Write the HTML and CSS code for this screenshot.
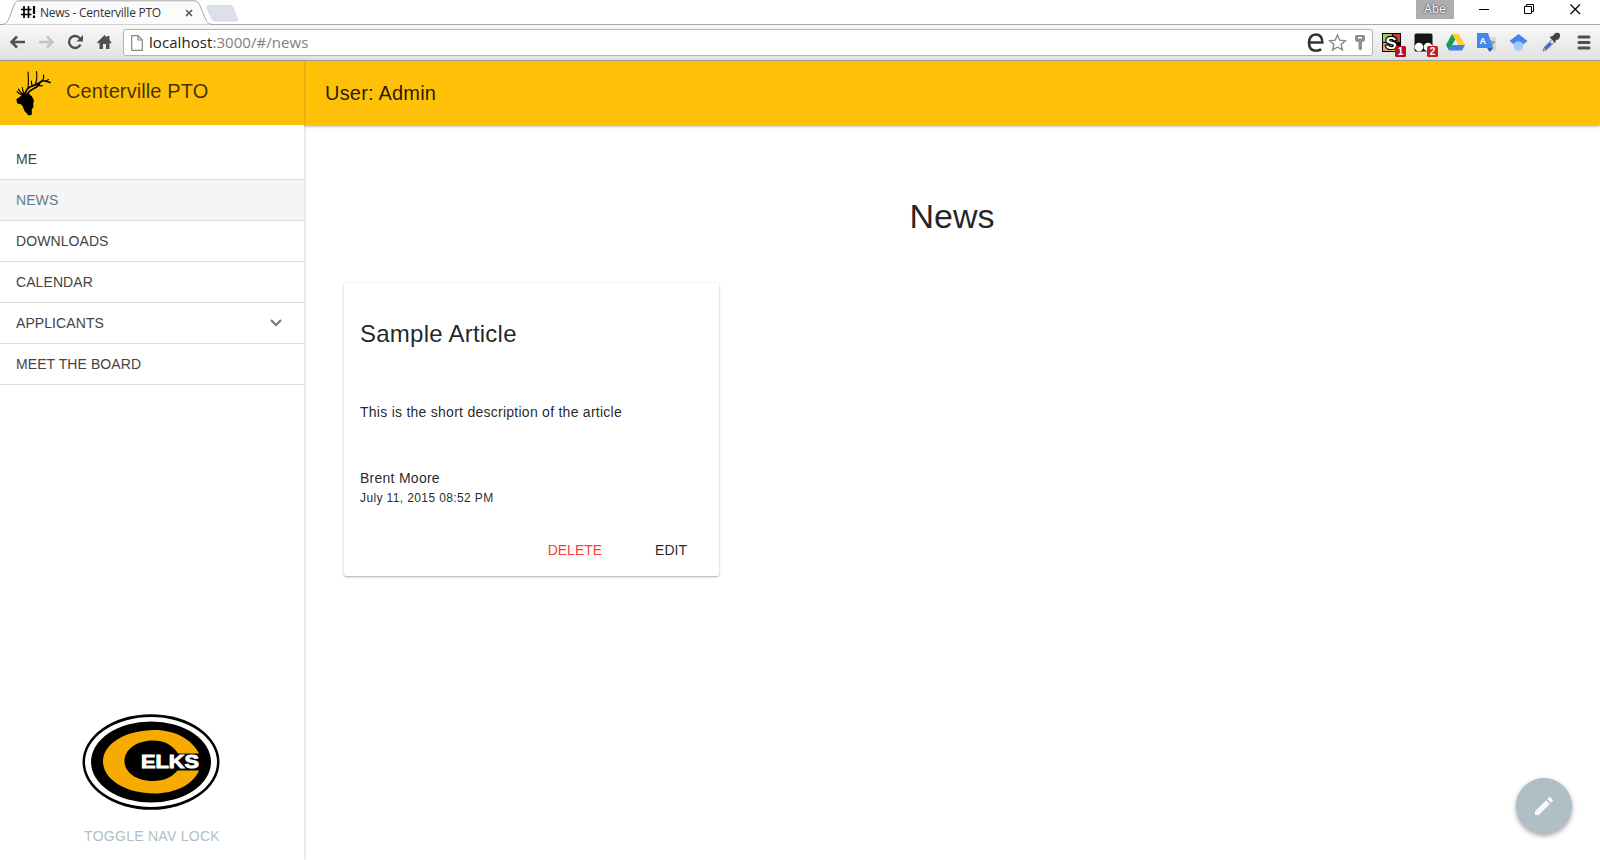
FILE: index.html
```html
<!DOCTYPE html>
<html lang="en">
<head>
<meta charset="utf-8">
<title>News - Centerville PTO</title>
<link rel="stylesheet" href="styles.css">
</head>
<body>
<div class="window">
  <header class="tabstrip">
    <div class="tab">
      <svg class="tab-shape" width="214" height="25" viewBox="0 0 214 25"><path d="M0 24.5C5 24.5 7 23 8.5 19.500L14.500 4C15.500 1.500 17 .8 19 .8H194C197 .8 198.500 2 199.500 4.500L205.500 19C207 23 209 24.500 214 24.500" fill="#fbfbfb" stroke="#a5a5a5"/></svg>
      <svg class="favicon" width="15" height="13" viewBox="0 0 15 13"><path d="M3 0v12M7.500 0v12M0 3.500h10.500M0 8.500h10.500" stroke="#000" stroke-width="1.700"/><path d="M13 0v8M13 9.500v2.500" stroke="#000" stroke-width="2.200"/></svg>
      <span class="tab-title">News - Centerville PTO</span>
      <svg class="tab-close" width="8" height="8" viewBox="0 0 8 8"><path d="M1 1l6 6M7 1L1 7" stroke="#555" stroke-width="1.600"/></svg>
    </div>
    <svg class="new-tab" width="33" height="17" viewBox="0 0 33 17"><path d="M3 .5H24Q26 .5 27 2.500L31.500 14Q32 16 30 16H9Q7 16 6 14L1 3Q.5 .5 3 .5Z" fill="#dce0e8" stroke="#d5d9e0"/></svg>
    <div class="win-controls">
      <span class="profile">Abe</span>
      <svg width="130" height="19" viewBox="0 0 130 19" fill="none" stroke="#000"><path d="M25 9.500h10"/><path d="M70.500 6.500h7v7h-7zM72.500 6.500v-2h7v7h-2"/><path d="M116.500 4.500l9.500 9.500M126 4.500l-9.500 9.500" stroke-width="1.200"/></svg>
    </div>
  </header>

  <div class="toolbar">
    <svg class="nav-icons" width="112" height="24" viewBox="0 0 112 24" fill="none">
      <path d="M25 12H12M17 6.500L11.500 12l5.500 5.500" stroke="#505050" stroke-width="2.500"/>
      <path d="M39 12H52M47 6.500L52.500 12 47 17.500" stroke="#c4c4c4" stroke-width="2.500"/>
      <path d="M80 8.500A6 6 0 1 0 80.500 14.500" stroke="#505050" stroke-width="2.400"/><path d="M83 5v6.500h-6.500z" fill="#505050"/>
      <path d="M97 12.500L104.500 5 107 7.500V6h2.500v4l2 2.500-1 1-1-.8V19H106V14h-3v5H99.500V12.500l-1.500 1z" fill="#505050"/>
    </svg>
    <div class="omnibox">
      <svg width="12" height="16" viewBox="0 0 12 16"><path d="M.7.7H7l4.300 4.300v10.300H.7zM7 .7V5h4.300" fill="#fff" stroke="#888" stroke-width="1.200"/></svg>
      <span class="url"><b>localhost</b>:3000/#/news</span>
      <svg class="omni-actions" width="60" height="24" viewBox="0 0 60 24">
        <path d="M4 11.500H17.300C17.300 6 15 3.500 10.800 3.500 6.300 3.500 4 7 4 11.800 4 17 6.700 19.700 11.200 19.700c2 0 3.700-.5 5-1.300" fill="none" stroke="#333" stroke-width="2.600"/>
        <path d="M32.500 4l2.300 5.200 5.500.5-4.200 3.700 1.300 5.600-4.900-3-4.900 3 1.300-5.600-4.200-3.700 5.500-.5z" fill="#fff" stroke="#888" stroke-width="1.400"/>
        <path d="M50 5Q50 4 51 4H59Q60 4 60 5V9.500L58 11H57V18L55.500 19.500 53.500 18V11H52L50 9.500z" fill="#909090"/><path d="M53 6h4v1.500h-4z" fill="#fff"/>
      </svg>
    </div>
    <svg class="extensions" width="218" height="30" viewBox="0 0 218 30">
      <path d="M1 4H20V23H1z" fill="#000"/><path d="M2 5h9v8H2z" fill="#a8c860"/><path d="M12 5h7v8h-7z" fill="#c8402f"/><path d="M2 14h9v8H2z" fill="#e4a070"/><path d="M8 19h8v3H8z" fill="#f1d629"/>
      <text x="4.500" y="19.500" class="ext-s">S</text>
      <rect x="14" y="17" width="11" height="11" rx="1.500" fill="#b90c25"/><text x="19.500" y="26.200" class="ext-count">1</text>
      <rect x="33.500" y="4.500" width="18" height="18" rx="1.500" fill="#151515"/><circle cx="38" cy="18" r="4.300" fill="#fff"/><circle cx="47" cy="18" r="4.300" fill="#fff"/>
      <rect x="46" y="17" width="11" height="11" rx="1.500" fill="#c71b24"/><text x="51.500" y="26.200" class="ext-count">2</text>
      <path d="M71 5L65 16l3 5.500L74.500 10z" fill="#129d58"/><path d="M71 5h6.500l6.500 11h-6.500z" fill="#fdcd32"/><path d="M71 16h13l-3 5.500H68z" fill="#427fed"/>
      <path d="M105 8h10v14h-8z" fill="#d4d7dc"/><path d="M107 13h7M110 11v2M112.500 13q-1.500 5-5 6M108.500 14q2 4 4 5" stroke="#69808a" fill="none"/><path d="M96 4h11l5 15H96z" fill="#4588ed"/><path d="M106 19h6l-3 4z" fill="#3156b4"/><text x="98.500" y="15" class="ext-a">A</text>
      <path d="M137.500 5l9 7-9 7-9-7z" fill="#4586ea"/><circle cx="137.500" cy="17" r="4.800" fill="#a5c8ff"/>
      <path d="M162 22l1.500-4 8-8 2.500 2.500-8 8z" fill="#dce5f5" stroke="#777"/><path d="M164 20l6-6" stroke="#3763d5" stroke-width="2.500"/><path d="M168.500 8l3-1 3-3q5-1 4.500 3t-4 4l-1 3z" fill="#444"/>
      <path d="M198 8h10M198 13.500h10M198 19h10" stroke="#505050" stroke-width="3" stroke-linecap="round"/>
    </svg>
  </div>

  <div class="app">
    <aside class="sidebar">
      <div class="brand">
        <svg class="elk" width="36" height="46" viewBox="0 0 36 46"><path d="M.3 29.300L4.700 26.300 7 23.500 12.700 23.500 16 26.500 18 30.300 17.200 33.700 17.500 37 15.800 39.300V44.700L12.700 45.500 8.700 41.200 6.500 36 4.700 34.300 1.300 33.500z"/><path d="M9 24.500Q10 18.500 15 16.500 21 15 26.500 10.800 29 10.500 34 12.500M11.500 24Q13 21 17 19 21 17.500 23.500 14" fill="none" stroke="#000" stroke-width="1.700" stroke-linecap="round"/><path d="M12 18.500Q12.800 12 12 2M19.300 14.500Q21.500 9 20.500 1.500M26 11Q28.500 8 27.500 5M29.500 11.300L32.500 9.500M21 15Q23 16 26.500 15.800M9 24Q6.500 22 6.300 17.500M9 24Q4 23.500 2.500 19M7.500 25Q3 24.500 1 21.500M16.500 16Q15 13.500 15.500 11" fill="none" stroke="#000" stroke-width="1.100" stroke-linecap="round"/></svg>
        <span class="brand-name">Centerville PTO</span>
      </div>
      <nav class="menu">
        <a class="item">ME</a>
        <a class="item active">NEWS</a>
        <a class="item">DOWNLOADS</a>
        <a class="item">CALENDAR</a>
        <a class="item">APPLICANTS<svg class="chevron" width="12" height="8" viewBox="0 0 12 8"><path d="M1 1l5 5 5-5" fill="none" stroke="#757575" stroke-width="2"/></svg></a>
        <a class="item">MEET THE BOARD</a>
      </nav>
      <div class="side-footer">
        <svg class="logo" width="138" height="96" viewBox="0 0 138 96"><ellipse cx="69" cy="48" rx="68.500" ry="47.800"/><ellipse cx="69" cy="48" rx="66" ry="45" fill="#fff"/><ellipse cx="69" cy="48" rx="60" ry="40.500"/><path d="M117 39.500C110 25 92 16 73 16 43 16 21 30 21 47.500S43 79.500 73 79.500C92 79.500 111 71 117 56.500H95.500C90 63 82 67 71 67 54 67 42.500 58 42.500 47S54 26.500 71 26.500C82 26.500 91 31 96 39.500z" fill="#f7ab00"/><text x="59" y="54" textLength="58" lengthAdjust="spacingAndGlyphs" class="logo-text">ELKS</text></svg>
        <span class="toggle">TOGGLE NAV LOCK</span>
      </div>
    </aside>
    <main class="main">
      <div class="topbar">User: Admin</div>
      <h1 class="page-title">News</h1>
      <article class="card">
        <h2 class="card-title">Sample Article</h2>
        <p class="card-text">This is the short description of the article</p>
        <div class="author">Brent Moore</div>
        <div class="date">July 11, 2015 08:52 PM</div>
        <div class="actions"><span class="delete">DELETE</span><span class="edit">EDIT</span></div>
      </article>
    </main>
    <button class="fab" aria-label="Edit"><svg width="24" height="24" viewBox="0 0 24 24"><path d="M3 17.250V21h3.750L17.810 9.940l-3.750-3.750L3 17.250zM20.710 7.040a1 1 0 0 0 0-1.410l-2.340-2.340a1 1 0 0 0-1.410 0l-1.830 1.830 3.750 3.750 1.830-1.830z" fill="#f7f9fa"/></svg></button>
  </div>
</div>
</body>
</html>
```

FILE: styles.css
```css
* { box-sizing: border-box; }
body { margin: 0; font-family: "Liberation Sans", Arial, sans-serif; color: rgba(0,0,0,.87); background: #fff; }
svg { display: block; flex: none; }
.window { width: 1600px; height: 860px; display: flex; flex-direction: column; overflow: hidden; }

.tabstrip { height: 25px; flex: none; display: flex; background: #fff; border-bottom: 1px solid #a9a9a9; }
.tab { position: relative; width: 200px; height: 25px; display: flex; align-items: center; padding-left: 21px; }
.tab-shape { position: absolute; left: 0; top: 0; }
.favicon, .tab-title, .tab-close { position: relative; }
.tab-title { margin-left: 4px; width: 122px; font: 12px/24px "Open Sans", "Noto Sans", sans-serif; letter-spacing: -.26px; color: #333; white-space: nowrap; }
.tab-close { margin-left: 23px; }
.new-tab { margin: 5px 0 0 6px; }
.win-controls { margin-left: auto; display: flex; width: 184px; }
.profile { width: 38px; height: 19px; background: #aeaeae; color: #fff; font: 12px/18px "Open Sans", sans-serif; text-align: center; text-shadow: 0 0 2px #333, 0 0 1px #555; }

.toolbar { height: 36px; flex: none; display: flex; align-items: flex-start; background: linear-gradient(#f8f8f8, #e2e2e2); border-bottom: 1px solid #aaa; }
.nav-icons { margin-top: 5px; }
.omnibox { margin: 4px 0 0 11px; width: 1250px; height: 27px; border: 1px solid #b3b3b3; border-radius: 3px; background: #fff; display: flex; align-items: center; padding-left: 7px; }
.url { margin-left: 6px; margin-top: -2px; font: 15px/24px "Open Sans", "Noto Sans", sans-serif; letter-spacing: .06px; color: #808080; }
.url b { font-weight: 400; color: #222; }
.omni-actions { margin-left: auto; margin-right: 7px; }
.extensions { margin-left: 8px; margin-top: 4px; }
.ext-s { font: bold 17px "Liberation Sans", sans-serif; fill: #fff; stroke: #000; stroke-width: 2.500px; paint-order: stroke; }
.ext-count { font: bold 10px "Liberation Sans", sans-serif; fill: #fff; text-anchor: middle; }
.ext-a { font: bold 9px "Liberation Sans", sans-serif; fill: #fff; }

.app { position: relative; flex: 1; display: flex; min-height: 0; }
.sidebar { position: relative; z-index: 2; width: 304px; flex: none; display: flex; flex-direction: column; background: #fff; box-shadow: 0 0 3px rgba(0,0,0,.28); }
.brand { height: 64px; flex: none; display: flex; background: #ffc107; }
.elk { margin: 9px 0 0 16px; }
.brand-name { margin-left: 14px; font-size: 20px; line-height: 60px; letter-spacing: .1px; color: rgba(0,0,0,.75); }
.menu { padding-top: 14px; }
.item { height: 41px; padding: 0 22px 0 16px; display: flex; align-items: center; justify-content: space-between; border-bottom: 1px solid #dcdcdc; font-size: 14px; letter-spacing: .08px; color: #444; }
.item.active { background: #f5f5f5; color: #607d8b; }
.side-footer { margin-top: auto; height: 146px; padding-right: 2px; display: flex; flex-direction: column; align-items: center; }
.logo-text { font: 900 18px "Liberation Sans", Arial, sans-serif; fill: #fff; stroke: #fff; stroke-width: .9px; }
.toggle { margin: 16px 0 0 2px; font-size: 14px; line-height: 20px; color: #b0bec5; letter-spacing: .27px; }

.main { flex: 1; display: flex; flex-direction: column; }
.topbar { height: 64px; flex: none; padding-left: 21px; background: #ffc107; font-size: 20px; line-height: 64px; letter-spacing: .2px; box-shadow: 0 1px 3px rgba(0,0,0,.4); }
.page-title { margin: 71px 0 0; font-size: 34px; font-weight: 400; line-height: 40px; text-align: center; }
.card { margin: 47px 0 0 40px; width: 375px; height: 293px; padding: 31px 16px 0; border-radius: 2px; box-shadow: 0 1px 3px rgba(0,0,0,.24), 0 1px 1px rgba(0,0,0,.12); }
.card-title { margin: 0; font-size: 24px; font-weight: 400; line-height: 40px; letter-spacing: .24px; }
.card-text { margin: 48px 0 0; font-size: 14px; line-height: 20px; letter-spacing: .26px; }
.author { margin-top: 46px; font-size: 14px; line-height: 20px; letter-spacing: .26px; }
.date { margin-top: 1px; font-size: 12px; line-height: 18px; letter-spacing: .38px; }
.actions { display: flex; justify-content: flex-end; gap: 53px; margin: 33px 16px 0 0; font-size: 14px; line-height: 20px; letter-spacing: 0; }
.delete { color: #f44336; }
.fab { position: absolute; left: 1516px; top: 717px; width: 56px; height: 56px; padding: 0; border: 0; border-radius: 50%; background: #b0bec5; display: flex; align-items: center; justify-content: center; box-shadow: 0 2px 5px rgba(0,0,0,.35); }
```
